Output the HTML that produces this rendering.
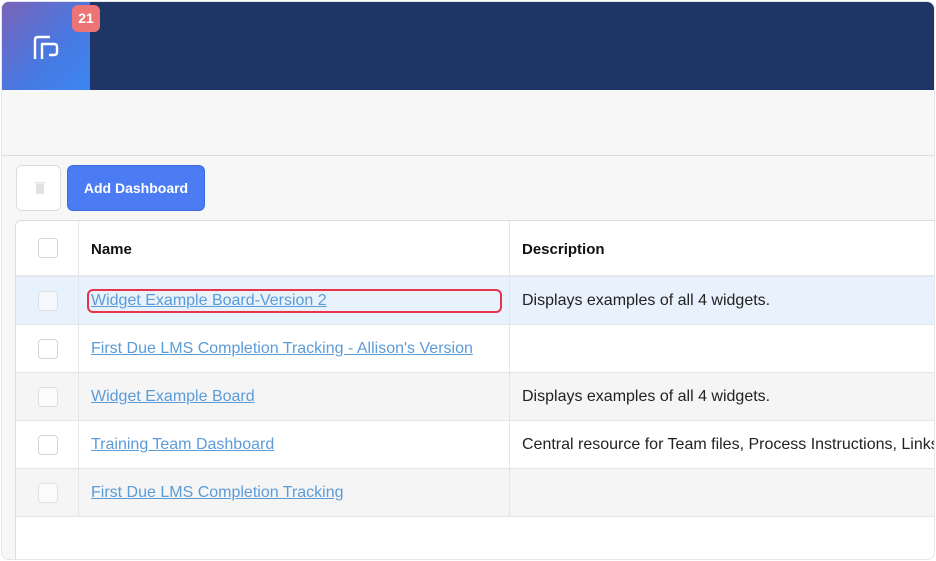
<!DOCTYPE html>
<html><head><meta charset="utf-8"><style>
*{box-sizing:border-box;margin:0;padding:0}
body{width:936px;height:561px;overflow:hidden;background:#fff;font-family:"Liberation Sans",Arial,sans-serif;position:relative}
.frame{position:absolute;left:1px;top:1px;width:934px;height:559px;border:1px solid #e4e6ea;border-radius:8px;overflow:hidden;background:#f7f7f8}
.hdr{position:absolute;left:0;top:0;width:934px;height:88px;background:#1e3565}
.logo{position:absolute;left:0;top:0;width:88px;height:88px;background:linear-gradient(135deg,#7a63b8 0%,#4a78e0 55%,#3a86f3 100%)}
.badge{position:absolute;left:70px;top:3px;width:28px;height:27px;background:#ec7474;border-radius:6px;color:#fff;font-weight:bold;font-size:14px;text-align:center;line-height:27px}
.sep{position:absolute;left:0;top:153px;width:934px;height:1px;background:#dcdde0}
.trash{position:absolute;left:14px;top:163px;width:45px;height:46px;background:#fff;border:1px solid #dcdde0;border-radius:6px}
.add{position:absolute;left:65px;top:163px;width:138px;height:46px;background:#4b7cf4;border:1px solid #3d6be0;border-radius:6px;color:#fff;font-weight:bold;font-size:14px;text-align:center;line-height:44px}
.tbl{position:absolute;left:13px;top:218px;width:930px;height:350px;background:#fff;border:1px solid #dcdde0;border-radius:6px 0 0 0}
.row{position:absolute;left:0;width:930px;height:48px;border-bottom:1px solid #e4e5e8}
.cb{position:absolute;left:22px;top:14px;width:20px;height:20px;border:1px solid #d4d5d8;border-radius:4px;background:#fff}
.v1{position:absolute;left:62px;top:0;width:1px;height:100%;background:#e4e5e8}
.v2{position:absolute;left:493px;top:0;width:1px;height:100%;background:#e4e5e8}
.n{position:absolute;left:75px;top:15px;font-size:16px;color:#5b9bd8;text-decoration:underline;white-space:nowrap}
.d{position:absolute;left:506px;top:15px;font-size:16px;color:#222;white-space:nowrap}
.th{font-weight:bold;color:#111;text-decoration:none;font-size:15px}
</style></head><body>
<div class="frame">
<div class="hdr"><div class="logo">
<svg width="88" height="88" style="position:absolute;left:0;top:0"><g fill="none" stroke="#fff" stroke-width="2.4" stroke-linejoin="round"><path d="M33 57V38Q33 35 36 35H48"/><path d="M40 57V42H52Q55 42 55 45V50Q55 53 52 53H47"/></g></svg>
</div></div>
<div class="badge">21</div>
<div class="sep"></div>
<div class="trash"><svg width="45" height="46"><rect x="19" y="18" width="8" height="10" rx="1" fill="#e2e2e2"/><rect x="18" y="16" width="10" height="1.5" fill="#e2e2e2"/></svg></div>
<div class="add">Add Dashboard</div>
<div class="tbl">
<div class="row" style="top:0;height:56px;border-bottom:2px solid #e4e6ea"><div class="cb" style="top:17px"></div><div class="v1"></div><div class="v2"></div><div class="n th" style="top:20px">Name</div><div class="d th" style="top:20px">Description</div></div>
<div class="row" style="top:56px;background:#e8f2fc"><div class="cb" style="opacity:.6"></div><div class="v1"></div><div class="v2"></div><div class="n">Widget Example Board-Version 2</div><div class="d">Displays examples of all 4 widgets.</div>
<div style="position:absolute;left:71px;top:12px;width:415px;height:24px;border:2px solid #e8334a;border-radius:6px"></div></div>
<div class="row" style="top:104px"><div class="cb"></div><div class="v1"></div><div class="v2"></div><div class="n">First Due LMS Completion Tracking - Allison's Version</div></div>
<div class="row" style="top:152px;background:#f5f5f6"><div class="cb" style="opacity:.7"></div><div class="v1"></div><div class="v2"></div><div class="n">Widget Example Board</div><div class="d">Displays examples of all 4 widgets.</div></div>
<div class="row" style="top:200px"><div class="cb"></div><div class="v1"></div><div class="v2"></div><div class="n">Training Team Dashboard</div><div class="d">Central resource for Team files, Process Instructions, Links</div></div>
<div class="row" style="top:248px;background:#f5f5f6"><div class="cb" style="opacity:.6"></div><div class="v1"></div><div class="v2"></div><div class="n">First Due LMS Completion Tracking</div></div>
</div>
</div>
</body></html>
